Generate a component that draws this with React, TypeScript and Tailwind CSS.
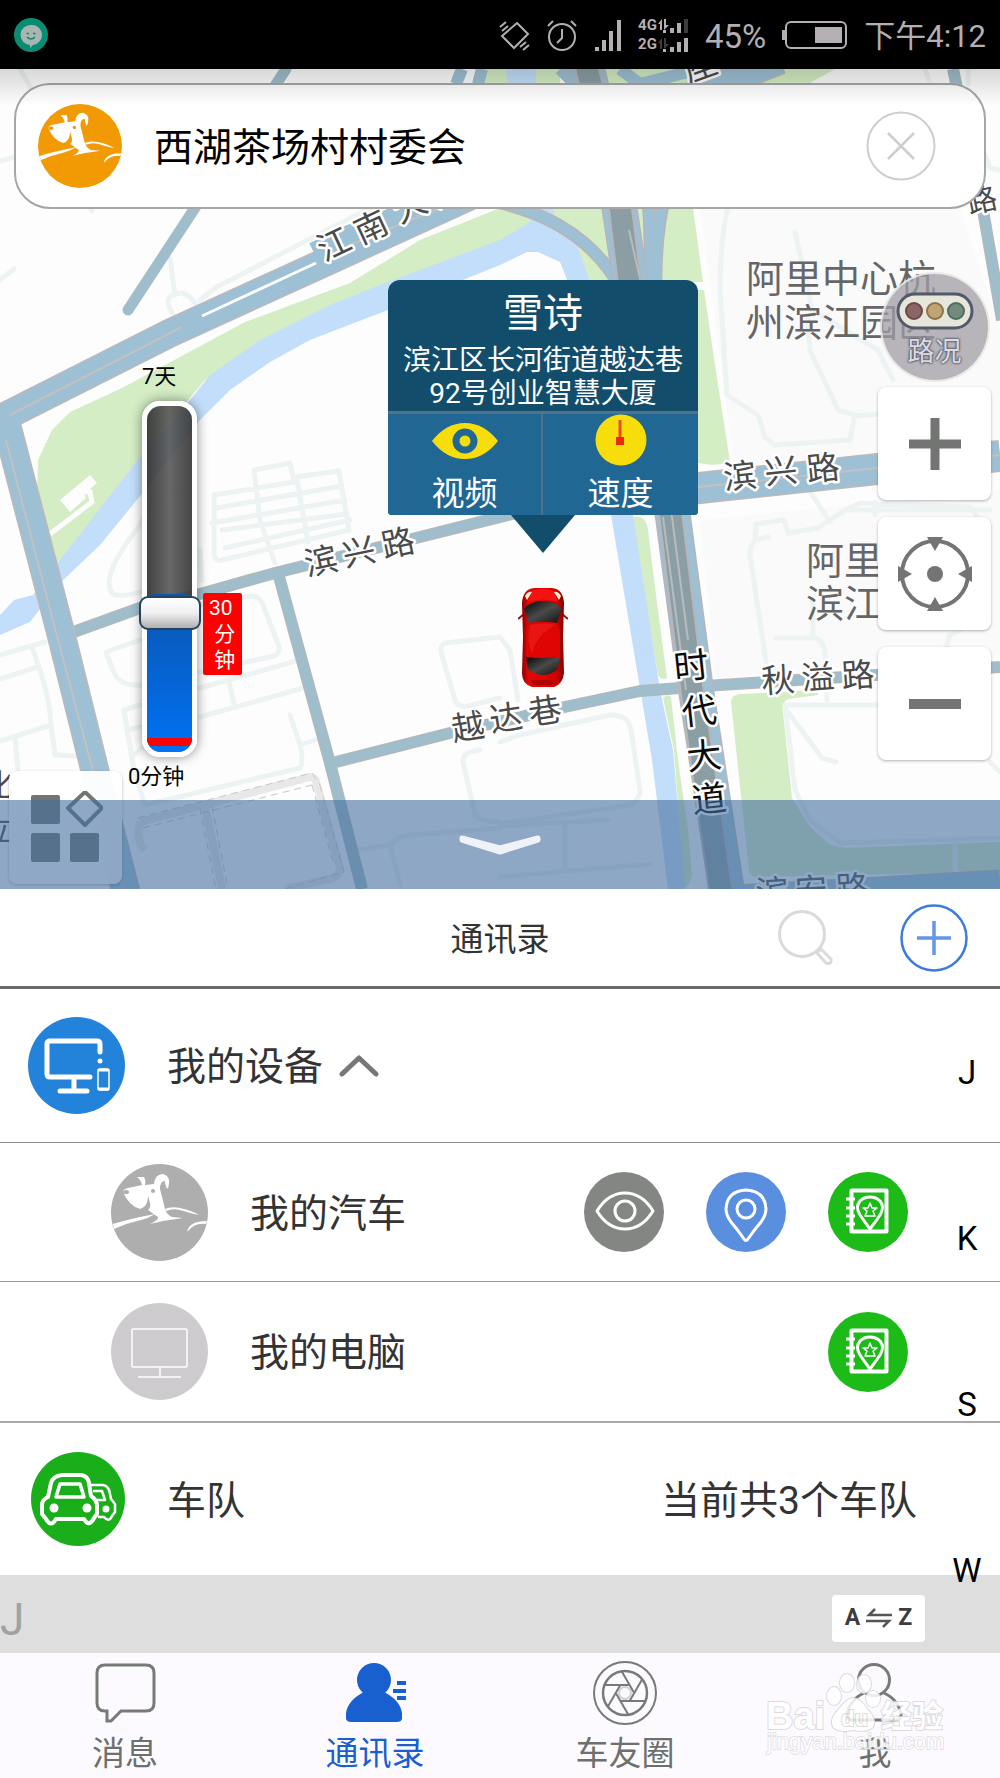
import React, { useState } from 'react';

type LabelChar = [string, number, number];

interface MapLabelProps {
  chars: LabelChar[];
  angle: number;
  size?: number;
  color?: string;
}

// Road names are set one character at a time so they follow the road
function MapLabel({ chars, angle, size = 33, color = '#4a4a4a' }: MapLabelProps) {
  return (
    <g fontSize={size} fill={color} stroke="#fff" strokeWidth="5" strokeLinejoin="round" paintOrder="stroke" textAnchor="middle">
      {chars.map(([char, x, y]) => (
        <text key={char} x={x} y={y} dy="0.36em" transform={`rotate(${angle} ${x} ${y})`}>
          {char}
        </text>
      ))}
    </g>
  );
}

function MapCanvas() {
  return (
    <svg
      viewBox="0 69 1000 820"
      preserveAspectRatio="xMidYMin slice"
      className="absolute inset-0 w-full h-full"
      fill="none"
    >
      <rect x="0" y="69" width="1000" height="820" fill="#fdfdfd" />
      <path d="M700 208H960L1000 330V450L735 470Z" fill="#fafafa" />
      <path d="M700 520L1000 490V655L716 678Z" fill="#fafafa" />

      {/* Parks */}
      <g fill="#d4edc4">
        <path d="M530 190L500 208L420 240L350 283L245 322L165 365L122 388L70 412L52 430L38 460L37 495L45 525L58 566L140 457L205 380L260 345L330 308L385 286L500 242L530 225L560 190Z" />
        <path d="M480 69H560V84H480ZM590 69H835L808 84H590Z" />
        <path d="M553 200H692L703 282H585L575 240L553 232Z" />
        <path d="M690 290L704 290L715 365L730 462Q715 467 698 463Z" />
        <path d="M633 517H640Q647 519 648 530L656 595L667 678Q662 681 658 675L645 600Z" />
        <path d="M663 698Q668 693 671 697L678 760L688 830L692 875Q690 885 684 889L674 750Z" />
        <path d="M731 702Q731 695 740 694L785 692L818 689V695L788 699Q782 702 783 712L792 798L810 827L830 845L845 848L1000 842V872L755 877Q750 876 749 870Z" />
      </g>

      {/* River */}
      <g fill="#c3defb">
        <path d="M530 208V222L500 240L385 283L330 305L260 340L210 375L190 400L140 457L56 565L33 595L14 600L0 615V635L30 622L60 583L100 545L145 490L200 420L230 390L270 362L310 340L388 310L500 265L527 252H538L560 262L568 282H590L577 245L570 238L554 230V208Z" />
        <path d="M611 515H633L660 690L673 750L685 889H668L652 760Z" />
        <path d="M505 69H536V84H508Z" />
      </g>
      <path d="M50 534L92 502L90 492L78 492" stroke="#fdfdfd" strokeWidth="5" />
      <path d="M60 500L90 475L97 483L84 494L86 498L70 512Z" fill="#fdfdfd" />

      {/* Alleys */}
      <g stroke="#edf3f3" strokeWidth="5" strokeLinecap="round" strokeLinejoin="round">
        <path d="M20 69L38 100M0 280L14 269M0 161L14 157M90 207L92 211M170 258L175 295M173 314Q160 294 182 293Q190 295 195 303M200 300L215 288L370 208" />
        <path d="M214 495L294 482L290 463L254 470L260 520L275 563M295 477L339 471L349 530L222 560Q216 562 214 555L214 495M216 508L342 486M212 523L345 500M222 530L347 514M225 548L350 520M297 480L308 542" />
        <path d="M185 490Q150 495 140 525Q100 575 112 593Q120 600 155 587M200 550L202 580" />
        <path d="M106 652L140 640M106 652L115 675Q122 687 145 685M200 605L250 596Q260 596 263 605L279 647Q280 653 274 656L200 672" />
        <path d="M200 688L296 661M200 717L303 688M229 682L235 708M124 710L140 705M124 710L128 735L134 770L145 805L300 768Q304 762 300 745L290 715M134 755L145 745M300 745L315 740M140 727L128 730" />
        <path d="M0 655L45 642M32 647L40 670Q50 700 51 725L55 755L76 756M0 679L38 667M0 741L48 726M15 738L18 770" />
        <path d="M500 637L445 643Q440 645 441 652L455 700Q458 708 468 706L500 698M500 637L510 650L518 700" />
        <path d="M500 742L520 735L610 715Q628 714 631 730L640 790Q640 800 630 805L500 824M480 750Q462 752 463 762L475 815Q480 822 500 822M500 826L608 820M500 877L650 864M565 825V870M355 850L390 845Q398 836 410 835L500 828M390 845L400 885" />
        <path d="M728 208Q720 240 720 290L727 395L758 415L765 437L775 445L850 440L855 415L838 410L810 350L808 320M795 232L806 280L812 310L878 350L893 380M855 416L880 414" />
        <path d="M768 537L755 540Q750 545 750 555L766 662M755 540L756 524L784 520L788 533L818 528L845 510H990M811 493L830 522M875 502V515M845 510L860 503L970 507L980 520M776 638H815Q822 640 825 650L827 700M813 600V638" />
        <path d="M785 705H880M785 705L795 790L810 820L840 843L1000 838M788 712L822 758L836 762M990 762L1000 772M945 650L950 635L960 630M955 845V870L965 880" />
        <path d="M1000 170L990 168L985 155M1000 290V300M925 69L930 84M968 69V84" />
      </g>
      <path d="M140 822L310 777Q316 777 317 785L340 868Q340 876 330 879L285 889M140 822Q135 840 145 850M205 805L222 889" stroke="#e8e8e8" strokeWidth="8" />
      <path d="M138 818L312 773L320 785M143 828L312 785M200 808L216 889M212 806L228 889M320 785L344 872L285 889M312 785L334 866" stroke="#c8c8c8" strokeWidth="1" strokeDasharray="7 5" />

      {/* Minor roads */}
      <g strokeLinejoin="round">
        <g stroke="#b8b8b8" strokeWidth="12">
          <path d="M68 634L140 608L200 594L275 573L420 537L520 512" />
          <path d="M278 573L330 763L362 889" />
          <path d="M328 764L450 733L560 708L640 691L720 685L1000 667" />
          <path d="M953 69L983 210L1002 320" />
        </g>
        <g stroke="#9fbdca" strokeWidth="10">
          <path d="M286 69L128 310" strokeLinecap="round" strokeWidth="11" />
          <path d="M68 634L140 608L200 594L275 573L420 537L520 512" />
          <path d="M278 573L330 763L362 889" />
          <path d="M328 764L450 733L560 708L640 691L720 685L1000 667" />
          <path d="M953 69L983 210L1002 320" />
        </g>
      </g>

      {/* Highways */}
      <g stroke="#bcb9bc" strokeWidth="29">
        <path d="M3 412L8 430L60 630L96 775L126 892" />
        <path d="M-10 424L170 333L330 260L470 196L560 150L780 60" />
        <path d="M690 489L1000 456" strokeWidth="32" />
        <path d="M735 899L860 892L1000 884" />
      </g>
      <g stroke="#9dc0d4" strokeWidth="26">
        <path d="M3 412L8 430L60 630L96 775L126 892" />
        <path d="M-10 424L170 333L330 260L470 196L560 150L780 60" />
        <path d="M690 489L1000 456" strokeWidth="29" />
        <path d="M735 899L860 892L1000 884" />
      </g>
      <path d="M315 255L350 238L470 190" stroke="#9dc0d4" strokeWidth="26" />
      <path d="M202 316L316 263" stroke="#fdfdfd" strokeWidth="3" />
      <g stroke="#c3c0c3" strokeWidth="2">
        <path d="M10 415L182 327M350 245L470 196M6 440L58 640L94 775L124 892M690 488L1000 455" />
      </g>
      <path d="M462 69L456 84M482 69L478 84" stroke="#9dc0d4" strokeWidth="12" />

      {/* Elevated road and its ramps */}
      <g stroke="#b8b5ba" strokeWidth="13">
        <path d="M500 203Q585 222 622 290M648 200Q652 240 648 290M664 200Q655 240 656 290" />
      </g>
      <g stroke="#9dc0d4" strokeWidth="10">
        <path d="M500 203Q585 222 622 290M648 200Q652 240 648 290M664 200Q655 240 656 290" />
      </g>
      <path d="M560 69L575 84M620 69L640 84L700 69M740 84L770 69" stroke="#9dc0d4" strokeWidth="12" />
      <path d="M585 60L619 205L630 279L673 517L696 690L727 892" stroke="#b8b5ba" strokeWidth="36" />
      <path d="M585 60L619 205L630 279L673 517L696 690L727 892" stroke="#9dc0d4" strokeWidth="33" />
      <path d="M585 60L620 205L629 279L671 517L692 690L721 892" stroke="#b8b5ba" strokeWidth="25" />
      <path d="M585 60L620 205L629 279L671 517L692 690L721 892" stroke="#8b9ea4" strokeWidth="21" />
      <path d="M629 230L640 279L672 517L688 640" stroke="#b5bbbe" strokeWidth="2" />
      <path d="M663 517L686 690" stroke="#b5bbbe" strokeWidth="2" />

      {/* Labels */}
      <MapLabel angle={-25} chars={[['江', 334, 244], ['南', 371, 227], ['大', 410, 206], ['道', 447, 190]]} />
      <MapLabel angle={-12} chars={[['滨', 321, 561], ['兴', 359, 552], ['路', 398, 543]]} />
      <MapLabel angle={-6} chars={[['滨', 740, 476], ['兴', 781, 471], ['路', 823, 468]]} />
      <MapLabel angle={-9} chars={[['越', 468, 727], ['达', 506, 718], ['巷', 545, 711]]} />
      <MapLabel angle={-4} chars={[['秋', 778, 680], ['溢', 818, 677], ['路', 858, 675]]} />
      <MapLabel angle={-6} color="#0c0c0c" size={35} chars={[['时', 691, 666], ['代', 699, 711], ['大', 704, 756], ['道', 709, 799]]} />
      <MapLabel angle={-3} chars={[['滨', 772, 892], ['安', 811, 890], ['路', 852, 888]]} />
      <MapLabel angle={-12} chars={[['路', 982, 200]]} size={30} />
      <MapLabel angle={-20} chars={[['座', 700, 66]]} />
      <MapLabel angle={0} chars={[['化', -2, 784], ['立', -2, 829]]} size={30} />
      <g fontSize="38" fill="#666">
        <text x="746" y="292">阿里中心杭</text>
        <text x="746" y="336">州滨江园区</text>
        <text x="806" y="574">阿里</text>
        <text x="806" y="617">滨江</text>
      </g>
    </svg>
  );
}

function DogIcon({ color, className }: { color: string; className: string }) {
  return (
    <svg viewBox="0 0 97 97" className={className}>
      <circle cx="48.500" cy="48.500" r="48.500" fill={color} />
      <g fill="#fff">
        <path d="M12 28Q12 25 17 24L31 21Q30 16 26 13H33Q35 16 34 21L43 20Q44 10 52 10Q59 12 58 19Q58 23 56 25Q54 21 54 17Q49 17 49 25L54 45Q56 51 61 53L72 54Q55 56 39 60Q48 56 47 53L37 46Q40 44 39 39L37 32Q37 43 29 45Q18 42 12 28Z" />
        <path d="M2 60Q18 55 44 50Q38 54 30 56Q16 59 3 65Z" />
        <path d="M54 45Q60 42 69 44Q82 47 88 51Q78 49 69 46Q62 44 55 47Z" />
        <path d="M76 68Q78 57 96 57L95 60Q84 58 76 68Z" />
      </g>
      <ellipse cx="15" cy="28" rx="3" ry="2" fill={color} />
      <circle cx="42" cy="27" r="2" fill={color} />
    </svg>
  );
}

function DevicesIcon() {
  return (
    <svg viewBox="0 0 97 97" className="w-[97px] h-[97px]" fill="none" stroke="#fff" strokeWidth="5" strokeLinecap="round" strokeLinejoin="round">
      <circle cx="48.500" cy="48.500" r="48.500" fill="#2382d9" stroke="none" />
      <path d="M62 60H22Q19 60 19 57V27Q19 24 22 24H69Q72 24 72 27V35M46 60V73M32 74H59" />
      <circle cx="72" cy="44" r="2.500" fill="#fff" stroke="none" />
      <rect x="70" y="52" width="11" height="21" rx="2" strokeWidth="1.500" />
      <path d="M71 53H80M71 72H80" strokeWidth="3" />
    </svg>
  );
}

function ComputerIcon() {
  return (
    <svg viewBox="0 0 97 97" className="w-[97px] h-[97px]" fill="none" stroke="#fff" strokeWidth="1.500">
      <circle cx="48.500" cy="48.500" r="48.500" fill="#cdcbce" stroke="none" />
      <rect x="21" y="26" width="55" height="38" rx="1" />
      <path d="M49 64V74M27 74H70" />
    </svg>
  );
}

function FleetIcon() {
  return (
    <svg viewBox="0 0 94 94" className="w-[94px] h-[94px]" fill="none" stroke="#fff" strokeWidth="4" strokeLinejoin="round">
      <circle cx="47" cy="47" r="47" fill="#1aaf1a" stroke="none" />
      <path d="M60 33H72Q78 34 79 42L80 47L84 52V60L81 64Q78 71 73 65H67M62 39H71L74 48H65" strokeWidth="2.500" />
      <circle cx="75" cy="57" r="3.500" fill="#fff" stroke="none" />
      <path d="M31 23H50Q57 24 58 31L60 44Q66 48 66 54V62L63 66Q58 76 53 67H25Q20 76 15 67L11 62V52Q12 47 17 45L20 31Q22 24 31 23Z" fill="#1aaf1a" />
      <path d="M29 32H49L53 45H25Z" strokeWidth="3.500" />
      <circle cx="23" cy="56" r="4.500" fill="#fff" stroke="none" />
      <circle cx="56" cy="56" r="4.500" fill="#fff" stroke="none" />
    </svg>
  );
}

function NotebookIcon() {
  return (
    <svg viewBox="0 0 80 80" className="w-20 h-20" fill="none" stroke="#fff" strokeWidth="3" strokeLinejoin="round">
      <circle cx="40" cy="40" r="40" fill="#1cbb18" stroke="none" />
      <rect x="23.500" y="18.500" width="35" height="41" strokeWidth="4" />
      <path d="M18 27H27M18 36H27M18 44H27M18 52H27" strokeWidth="3" />
      <path d="M42 57Q36 49 32 43Q27 35 32 29Q36 25 42 25Q48 25 52 29Q57 35 52 43Q48 49 42 57Z" />
      <path d="M42 31L44 36L49 36L45 39L47 44H37L39 39L35 36L40 36Z" strokeWidth="1.500" />
    </svg>
  );
}

function EyeIcon() {
  return (
    <svg viewBox="0 0 80 80" className="w-20 h-20" fill="none" stroke="#fff" strokeWidth="3" strokeLinejoin="round">
      <circle cx="40" cy="40" r="40" fill="#848683" stroke="none" />
      <path d="M13 39Q24 21 41 21Q58 21 69 39Q58 57 41 57Q24 57 13 39Z" />
      <circle cx="41" cy="39" r="10" />
    </svg>
  );
}

function PinIcon() {
  return (
    <svg viewBox="0 0 80 80" className="w-20 h-20" fill="none" stroke="#fff" strokeWidth="3" strokeLinejoin="round">
      <circle cx="40" cy="40" r="40" fill="#5a8fe0" stroke="none" />
      <path d="M38 67Q32 58 25 50Q20 43 20 37Q21 19 40 18Q59 19 60 37Q60 43 55 50Q48 58 42 67Q40 70 38 67Z" />
      <circle cx="40" cy="37" r="9" />
    </svg>
  );
}

function RedCar() {
  return (
    <svg viewBox="0 0 50 100" className="w-[50px] h-[100px]">
      <defs>
        <linearGradient id="car-body" x1="0" x2="1">
          <stop offset="0" stopColor="#8d0000" />
          <stop offset="0.150" stopColor="#e00808" />
          <stop offset="0.600" stopColor="#e30000" />
          <stop offset="0.850" stopColor="#c80000" />
          <stop offset="1" stopColor="#7d0000" />
        </linearGradient>
        <linearGradient id="car-glass" x1="0" x2="1" y1="0" y2="1">
          <stop offset="0" stopColor="#050505" />
          <stop offset="0.500" stopColor="#4a4a4a" />
          <stop offset="1" stopColor="#111" />
        </linearGradient>
      </defs>
      <path d="M6 27L0 32M44 27L50 32" stroke="#a01010" strokeWidth="2" />
      <path d="M4 16Q5 2 16 1H34Q45 2 46 16L45 50L46 86Q45 97 36 100H14Q4 97 4 86L5 50Z" fill="url(#car-body)" />
      <path d="M14 4Q25 0 36 4L40 15Q25 10 10 15Z" fill="#f51212" />
      <path d="M7 9Q10 4 14 5L9 13ZM43 9Q40 4 36 5L41 13Z" fill="#fff3d0" />
      <path d="M6 22Q12 14 25 14Q38 14 44 22L39 36Q25 34 11 36Z" fill="url(#car-glass)" />
      <path d="M11 36Q25 34 39 36L42 44V70H8V44Z" fill="#df0505" />
      <path d="M38 38Q20 46 14 66Q8 55 12 38Q25 35 38 38Z" fill="#ee2020" opacity="0.600" />
      <path d="M8 70Q25 72 42 70L40 82Q25 94 10 82Z" fill="url(#car-glass)" />
      <path d="M12 93H38L34 98H16Z" fill="#b00000" />
    </svg>
  );
}

function StatusBar() {
  return (
    <header className="h-[69px] shrink-0 bg-black text-[#b3afb3] flex items-center justify-between px-3.5">
      <svg viewBox="0 0 34 34" className="w-[34px] h-[34px]">
        <circle cx="17" cy="17" r="17" fill="#098c74" />
        <path d="M17 7A10 10 0 1 1 19 27L16 30V27A10 10 0 0 1 17 7Z" fill="#a9b5b1" />
        <path d="M12.500 15.500H15M19 15.500H21.500M13 19Q17 23 21 19" stroke="#098c74" strokeWidth="1.500" fill="none" />
      </svg>
      <div className="flex items-center gap-4 text-[31px] leading-none">
        <svg viewBox="0 0 32 32" className="w-8 h-8" fill="none" stroke="currentColor" strokeWidth="2">
          <path d="M19 4L30 15L16 29L4 17Z" />
          <path d="M2 8L8 3M4 12L10 7M22 28L28 23M25 31L31 26" strokeWidth="2" />
        </svg>
        <svg viewBox="0 0 32 32" className="w-8 h-8" fill="none" stroke="currentColor" strokeWidth="2">
          <circle cx="16" cy="18" r="13" />
          <path d="M16 10V19L11 24M2 7L7 2M30 7L25 2" />
        </svg>
        <svg viewBox="0 0 28 32" className="w-7 h-8" fill="currentColor">
          <path d="M1 28H5V32H1ZM8 21H12V32H8ZM15 12H19V32H15ZM23 1H27V32H23Z" />
        </svg>
        <div className="flex flex-col gap-1 text-[15px] font-bold leading-[15px]">
          {['4G', '2G'].map((net, i) => (
            <div key={net} className="flex items-center">
              {net}
              <svg viewBox="0 0 32 15" className="w-8 h-[15px]" fill="currentColor">
                <path d="M1 6L5 1V12H3V6ZM7 1H9V7H12L7 12Z" opacity={i === 0 ? 1 : 0.35} />
                <path d="M6 12H9V15H6ZM13 10H17V15H13ZM20 5H24V15H20Z" />
                <path d="M27 1H31V15H27Z" opacity={i === 0 ? 0.35 : 1} />
              </svg>
            </div>
          ))}
        </div>
        <span className="pt-1 text-[33px]">45%</span>
        <svg viewBox="0 0 66 28" className="w-[66px] h-7">
          <rect x="4" y="1" width="60" height="26" rx="5" fill="none" stroke="currentColor" strokeWidth="2" />
          <path d="M0 9H4V19H0ZM33 6H60V22H33Z" fill="currentColor" />
        </svg>
        <span className="pt-1">下午4:12</span>
      </div>
    </header>
  );
}

function SearchBar() {
  const [query, setQuery] = useState('西湖茶场村村委会');

  return (
    <form
      className="relative mx-3.5 mt-3.5 h-[126px] flex items-center pl-[22px] pr-12 bg-white border-2 border-[#a6a6a6] rounded-[36px]"
      onSubmit={(e) => e.preventDefault()}
    >
      <DogIcon color="#f29a04" className="w-[84px] h-[84px] shrink-0" />
      <input
        type="text"
        aria-label="搜索地点"
        value={query}
        onChange={(e) => setQuery(e.target.value)}
        className="flex-1 min-w-0 ml-8 pt-1 text-[39px] leading-[52px] text-black bg-transparent outline-none"
      />
      <button type="button" aria-label="清除" onClick={() => setQuery('')}>
        <svg viewBox="0 0 70 70" className="w-[70px] h-[70px]" fill="none" stroke="#d0cdd0" strokeWidth="2.500">
          <circle cx="35" cy="35" r="33.500" strokeWidth="2" />
          <path d="M22 22L48 48M48 22L22 48" />
        </svg>
      </button>
    </form>
  );
}

function TimeSlider() {
  const [value, setValue] = useState(39);
  // the handle is 34px tall and moves inside a 346px track
  const offset = (value / 100) * 312;

  return (
    <div className="absolute left-[128px] top-[294px] flex flex-col items-start text-[22px] leading-7 text-black">
      <label htmlFor="time-range" className="pl-3.5">7天</label>
      <div className="relative ml-3.5 mt-2.5 w-[55px] h-[356px] rounded-[18px] border-[5px] border-white shadow-[0_0_12px_rgba(0,0,0,0.45)]">
        <div className="h-full rounded-[14px] overflow-hidden flex flex-col justify-end bg-gradient-to-r from-[#2e2e2e]/90 via-[#575757]/90 to-[#333333]/90">
          <div
            className="flex flex-col justify-end pb-1.5 rounded-t-lg bg-gradient-to-b from-[#0a55b0] to-[#0072f5]"
            style={{ height: offset + 36 }}
          >
            <div className="h-2 bg-[#ff0000]" />
          </div>
        </div>
        <div
          className="absolute -left-2 w-[62px] h-[34px] rounded-[9px] border-2 border-[#24445f] bg-gradient-to-b from-white via-[#f0f0f0] to-[#b0b0b0]"
          style={{ bottom: offset }}
        />
        <input
          id="time-range"
          type="range"
          min="0"
          max="100"
          value={value}
          onChange={(e) => setValue(parseInt(e.target.value))}
          className="absolute inset-y-0 -left-2 w-[62px] h-full opacity-0 cursor-pointer [writing-mode:vertical-lr] [direction:rtl]"
        />
        <div className="absolute left-14 top-[187px] w-[39px] h-[82px] pl-1.5 pt-0.5 rounded-xs bg-[#ff0000] text-white text-[21px] leading-[26px] whitespace-pre">
          {'30\n 分\n 钟'}
        </div>
      </div>
      <span className="mt-1.5">0分钟</span>
    </div>
  );
}

function VehicleCallout() {
  return (
    <div className="absolute left-[388px] top-[211px] w-[310px] flex flex-col items-center">
      <div className="w-full rounded-t-xl rounded-b-sm overflow-hidden bg-[#124d6b] text-white text-center">
        <div className="h-[131px] pt-2.5">
          <h2 className="text-[40px] leading-[48px]">雪诗</h2>
          <p className="mt-1.5 text-[28px] leading-[33px]">
            滨江区长河街道越达巷
            <br />
            92号创业智慧大厦
          </p>
        </div>
        <div className="grid grid-cols-2 border-t-[3px] border-[#4e738a] bg-[#216794] text-[33px]">
          <button className="h-[101px] flex flex-col items-center border-r-2 border-[#4e738a]">
            <svg viewBox="0 0 66 52" className="w-[66px] h-[52px] shrink-0">
              <path d="M0 27Q14 9 33 9Q52 9 66 27Q52 45 33 45Q14 45 0 27Z" fill="#f6dd0b" />
              <circle cx="33" cy="27" r="9" fill="none" stroke="#216794" strokeWidth="7" />
            </svg>
            <span className="pt-2 leading-[40px]">视频</span>
          </button>
          <button className="h-[101px] flex flex-col items-center">
            <svg viewBox="0 0 52 52" className="w-[52px] h-[52px] shrink-0">
              <circle cx="26" cy="26" r="25.500" fill="#f6dd0b" />
              <path d="M25 6V28" stroke="#ef4a12" strokeWidth="3" />
              <rect x="21" y="23" width="8" height="8" fill="#ec2a0c" />
            </svg>
            <span className="pt-2 leading-[40px]">速度</span>
          </button>
        </div>
      </div>
      <svg viewBox="0 0 64 38" className="w-16 h-[38px]">
        <path d="M0 0H64L32 38Z" fill="#124d6b" />
      </svg>
      <div className="mt-[34px]">
        <RedCar />
      </div>
    </div>
  );
}

const mapButtonClass =
  'w-[113px] h-[113px] flex items-center justify-center bg-white rounded-lg shadow-[0_1px_3px_rgba(0,0,0,0.3)]';

function MapControls() {
  return (
    <div className="absolute right-[9px] top-[203px] flex flex-col items-center gap-[17px]">
      <button className="-mb-3 w-[110px] h-[110px] flex flex-col items-center pt-[18px] rounded-full border-2 border-white/70 bg-[#a29ea4]/75">
        <svg viewBox="0 0 78 38" className="w-[78px] h-[38px]">
          <rect x="2" y="2" width="74" height="34" rx="17" fill="#e6e6da" stroke="#505a68" strokeWidth="3" />
          <circle cx="18" cy="19" r="8" fill="#8c6565" stroke="#6d4848" strokeWidth="2" />
          <circle cx="39" cy="19" r="8" fill="#c0a478" stroke="#8d7347" strokeWidth="2" />
          <circle cx="60" cy="19" r="8" fill="#748a7e" stroke="#4f6c60" strokeWidth="2" />
        </svg>
        <span className="mt-1.5 text-[27px] leading-8 text-[#dddbe2] [text-shadow:0_0_2px_#505868,0_0_2px_#505868,0_0_3px_#505868]">
          路况
        </span>
      </button>
      <button className={mapButtonClass} aria-label="放大">
        <svg viewBox="0 0 52 52" className="w-[52px] h-[52px]" stroke="#727572" strokeWidth="9">
          <path d="M26 0V52M0 26H52" />
        </svg>
      </button>
      <button className={mapButtonClass} aria-label="定位">
        <svg viewBox="0 0 76 76" className="w-[76px] h-[76px]" fill="#727572">
          <circle cx="38" cy="38" r="33" fill="none" stroke="#727572" strokeWidth="4" />
          <circle cx="38" cy="38" r="8" />
          <path d="M30 1H46L38 15ZM30 75H46L38 61ZM1 30V46L15 38ZM75 30V46L61 38Z" />
        </svg>
      </button>
      <button className={mapButtonClass} aria-label="缩小">
        <svg viewBox="0 0 52 10" className="w-[52px] h-[10px]">
          <rect width="52" height="10" fill="#727572" />
        </svg>
      </button>
    </div>
  );
}

function MapPanel() {
  return (
    <section className="relative h-[820px] shrink-0 overflow-hidden">
      <MapCanvas />
      <SearchBar />
      <div className="absolute inset-x-0 top-0 h-9 bg-gradient-to-b from-black/15 to-transparent pointer-events-none" />
      <TimeSlider />
      <VehicleCallout />
      <MapControls />
      <button
        aria-label="图层"
        className="absolute left-[9px] bottom-[5px] w-[113px] h-[113px] flex items-center justify-center rounded-lg bg-white/95 shadow-[0_1px_3px_rgba(0,0,0,0.3)]"
      >
        <svg viewBox="0 0 74 74" className="w-[74px] h-[74px]" fill="#727572">
          <rect x="2" y="4" width="29" height="29" rx="2" />
          <rect x="2" y="42" width="29" height="29" rx="2" />
          <rect x="41" y="42" width="29" height="29" rx="2" />
          <path d="M56 1L73 17L56 34L39 17Z" fill="none" stroke="#727572" strokeWidth="4" strokeLinejoin="round" />
        </svg>
      </button>
      <button aria-label="展开" className="absolute inset-x-0 bottom-0 h-[89px] flex items-center justify-center bg-[#446e9f]/60">
        <svg viewBox="0 0 84 22" className="w-[84px] h-[22px]" fill="#eff3f9" stroke="#eff3f9" strokeWidth="5" strokeLinejoin="round">
          <path d="M4 4L42 14L80 4L80 6L42 18L4 6Z" />
        </svg>
      </button>
    </section>
  );
}

function ContactsHeader() {
  return (
    <div className="h-[100px] shrink-0 grid grid-cols-[1fr_auto_1fr] items-center bg-white border-b-[3px] border-[#6a6a6a]">
      <h1 className="col-start-2 pt-1 text-[33px] text-[#333]">通讯录</h1>
      <div className="flex items-center justify-end gap-[66px] pr-8">
        <button aria-label="搜索">
          <svg viewBox="0 0 56 56" className="w-14 h-14" fill="none" stroke="#dcd9dc" strokeWidth="3">
            <circle cx="24" cy="24" r="22.500" />
            <path d="M39 43L43 39L53 49Q54 55 48 53Z" strokeLinejoin="round" />
          </svg>
        </button>
        <button aria-label="添加">
          <svg viewBox="0 0 68 68" className="w-[68px] h-[68px]" fill="none" stroke="#3b7be0">
            <circle cx="34" cy="34" r="32.500" strokeWidth="2.500" />
            <path d="M34 17V51M17 34H51" strokeWidth="3.500" stroke="#6396e6" />
          </svg>
        </button>
      </div>
    </div>
  );
}

function ContactList() {
  const [open, setOpen] = useState(true);

  return (
    <div className="relative bg-white text-[39px] text-[#333]">
      <button
        aria-expanded={open}
        onClick={() => setOpen(!open)}
        className="w-full h-[154px] flex items-center pl-7 border-b border-[#8c8c8c]"
      >
        <DevicesIcon />
        <span className="ml-[42px] pt-1">我的设备</span>
        <svg viewBox="0 0 40 24" className="ml-4 w-10 h-6" fill="none" stroke="#777" strokeWidth="5" strokeLinecap="round" strokeLinejoin="round">
          <path d="M3 20L20 4L37 20" />
        </svg>
      </button>

      {open && (
        <>
          <div className="h-[139px] flex items-center pl-[111px] pr-[92px] border-b border-[#9c9c9c]">
            <DogIcon color="#aeaeae" className="w-[97px] h-[97px]" />
            <span className="ml-[42px] pt-1 flex-1">我的汽车</span>
            <div className="flex gap-[42px]">
              <button aria-label="查看"><EyeIcon /></button>
              <button aria-label="位置"><PinIcon /></button>
              <button aria-label="轨迹"><NotebookIcon /></button>
            </div>
          </div>
          <div className="h-[141px] flex items-center pl-[111px] pr-[92px] border-b-2 border-[#a9a9a9]">
            <ComputerIcon />
            <span className="ml-[42px] pt-1 flex-1">我的电脑</span>
            <button aria-label="轨迹"><NotebookIcon /></button>
          </div>
        </>
      )}

      <div className="h-[152px] flex items-center pl-[31px] pr-[83px]">
        <FleetIcon />
        <span className="ml-[42px] pt-1 flex-1">车队</span>
        <span className="pt-1">当前共3个车队</span>
      </div>

      <div className="h-[78px] flex items-center justify-between pt-2 pr-[75px] bg-[#dedede]">
        <span className="text-[44px] leading-none text-[#a1a1a1] pt-1">J</span>
        <button className="w-[93px] h-[47px] flex items-center justify-center gap-1.5 rounded-sm bg-white text-[23px] font-bold text-[#3d3d3d]">
          A
          <svg viewBox="0 0 26 20" className="w-[26px] h-5" fill="none" stroke="#555" strokeWidth="2.500">
            <path d="M9 1L3 7H26M0 13H23L17 19" />
          </svg>
          Z
        </button>
      </div>

      {/* Letter index */}
      <nav className="absolute right-2.5 top-0 w-[46px] flex flex-col text-[33px] text-black text-center">
        {['J', 'K', 'S', 'W'].map((letter) => (
          <a key={letter} href={`#${letter}`} className="h-[166px] leading-[168px]">
            {letter}
          </a>
        ))}
      </nav>
    </div>
  );
}

function MessageIcon() {
  return (
    <svg viewBox="0 0 62 62" className="w-[62px] h-[62px]" fill="none" stroke="#777a77" strokeWidth="3">
      <path d="M11 3H52Q60 3 60 11V41Q60 49 52 49H27L17 59H13V49H11Q3 49 3 41V11Q3 3 11 3Z" />
    </svg>
  );
}

function ContactsIcon() {
  return (
    <svg viewBox="0 0 62 62" className="w-[62px] h-[62px]" fill="#185fd0">
      <circle cx="30" cy="18" r="17" />
      <path d="M20 30H40Q56 38 58 51V57Q57 60 53 60H7Q3 60 2 57V51Q4 38 20 30Z" />
      <path d="M53 19H62V23H53ZM49 27H62V31H49ZM53 34H62V38H53Z" />
    </svg>
  );
}

function CircleIcon() {
  return (
    <svg viewBox="-32 -32 64 64" className="w-16 h-16" fill="none" stroke="#777a77" strokeWidth="2">
      <circle r="31" />
      <circle r="22" strokeWidth="2.500" />
      <circle r="6" stroke="#d2d2d2" />
      {[0, 60, 120, 180, 240, 300].map((angle) => (
        <path key={angle} d="M-20 -8L4 -8" transform={`rotate(${angle})`} />
      ))}
    </svg>
  );
}

function MeIcon() {
  return (
    <svg viewBox="0 0 62 62" className="w-[62px] h-[62px]" fill="none" stroke="#777a77" strokeWidth="3">
      <circle cx="30" cy="18" r="15.500" />
      <path d="M20 31Q5 38 3 53Q3 58 8 58H52Q57 58 57 53Q55 38 40 31" />
    </svg>
  );
}

function Watermark() {
  return (
    <svg viewBox="0 0 184 92" className="absolute right-[53px] top-4 w-[184px] h-[92px] pointer-events-none" stroke="#d9d6da" strokeWidth="2" paintOrder="stroke" fill="#fff">
      <g opacity="0.850">
        <ellipse cx="71" cy="27" rx="7" ry="9" />
        <ellipse cx="84" cy="14" rx="7" ry="9" />
        <ellipse cx="101" cy="15" rx="7" ry="9" />
        <ellipse cx="110" cy="30" rx="7" ry="8" />
        <path d="M90 29Q98 30 104 40Q114 50 110 58Q104 64 90 61Q76 64 70 58Q66 50 76 40Q83 30 90 29Z" />
        <text x="3" y="60" fontSize="38" className="font-['Liberation_Sans',sans-serif] font-bold">Bai</text>
        <text x="78" y="57" fontSize="22" className="font-['Liberation_Sans',sans-serif] font-bold">du</text>
        <text x="118" y="58" fontSize="31" className="font-bold">经验</text>
        <text x="4" y="80" fontSize="22" strokeWidth="1.500" className="font-['Liberation_Sans',sans-serif]">jingyan.baidu.com</text>
      </g>
    </svg>
  );
}

const tabs = [
  { label: '消息', icon: <MessageIcon /> },
  { label: '通讯录', icon: <ContactsIcon />, active: true },
  { label: '车友圈', icon: <CircleIcon /> },
  { label: '我', icon: <MeIcon /> },
];

function TabBar() {
  return (
    <nav className="relative h-[125px] grid grid-cols-4 bg-[#fdfaff]">
      {tabs.map((tab) => (
        <button
          key={tab.label}
          className={`flex flex-col items-center pt-2 text-[33px] ${tab.active ? 'text-[#185fd0]' : 'text-[#6d706d]'}`}
        >
          <span className="h-16 flex items-center">{tab.icon}</span>
          <span className="mt-1 leading-[50px]">{tab.label}</span>
        </button>
      ))}
      <Watermark />
    </nav>
  );
}

export default function App() {
  return (
    <div className="min-h-screen flex flex-col overflow-hidden bg-white font-['Roboto','Noto_Sans_CJK_SC',sans-serif]">
      <StatusBar />
      <MapPanel />
      <ContactsHeader />
      <ContactList />
      <TabBar />
    </div>
  );
}
